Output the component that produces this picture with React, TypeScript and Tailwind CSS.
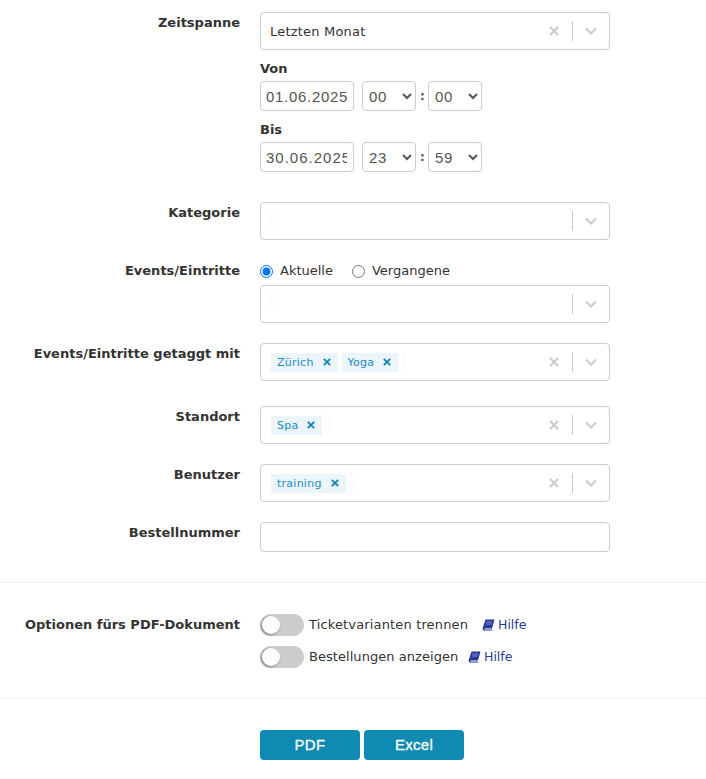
import { ReactNode } from "react";

const Chevron = () => (
  <svg width="12" height="8" viewBox="0 0 12 8" fill="none" className="text-[#cccccc]">
    <path d="M1 1.500 6 6.500l5-5" stroke="currentColor" strokeWidth="2.2" />
  </svg>
);

const Cross = ({ className }: { className: string }) => (
  <svg width="10" height="10" viewBox="0 0 10 10" fill="none" className={className}>
    <path d="M1 1l8 8M9 1 1 9" stroke="currentColor" strokeWidth="2.2" />
  </svg>
);

const BookIcon = () => (
  <svg width="13" height="12" viewBox="0 0 13 12" className="text-[#2a3a9c]">
    <path d="M3.500.500H12.500L10 9.500H3C2 9.500 1.800 10.500 3 10.500H10.500L10.200 11.500H2.500C1 11.500 .300 10.500 .700 9Z" fill="currentColor" />
    <path d="M4.500 3H10M4 5H9.500" stroke="#ffffff" strokeWidth="0.7" opacity="0.6" />
  </svg>
);

function Row({ label, children, className }: { label: string; children: ReactNode; className: string }) {
  return (
    <div className={`flex ${className}`}>
      <label className="w-[240px] pt-px text-right font-bold text-[13px] leading-[20px] text-[#333333] shrink-0">{label}</label>
      <div className="ml-5 w-[350px]">{children}</div>
    </div>
  );
}

function Combo({ tags, value, clear }: { tags?: string[]; value?: string; clear?: boolean }) {
  return (
    <div className="h-[38px] border border-[#cccccc] rounded flex items-center bg-white">
      <div className="flex-1 flex items-center pl-[10px] gap-1">
        {value && <span className="-ml-px pt-[2px] text-[13px] text-[#333333] tracking-[0.2px]">{value}</span>}
        {tags?.map((t) => (
          <span key={t} className="h-[19px] bg-[#ebf5fa] flex items-center pl-[6px] pr-[7px] gap-[9px] text-[11px] tracking-[0.25px] text-[#1a8cc8]">
            <span className="pt-[3px]">{t}</span>
            <Cross className="w-2 h-2 text-[#0f82b8]" />
          </span>
        ))}
        {!value && <span className="w-[3px] h-5 -mt-[2px] border border-[#fafafa] rounded-sm" />}
      </div>
      {clear && <Cross className="mr-[13px] text-[#cccccc]" />}
      <span className="w-px h-5 bg-[#cccccc]" />
      <span className="w-[36px] flex justify-center"><Chevron /></span>
    </div>
  );
}

function Time({ value }: { value: string }) {
  return (
    <select
      defaultValue={value}
      className="w-[54px] h-[30px] border border-[#cccccc] rounded pl-[2px] text-[15px] tracking-[0.7px] text-[#555555] bg-white font-['Liberation_Sans',sans-serif]"
    >
      <option>{value}</option>
    </select>
  );
}

function DateTime({ label, date, hour, minute, dateClass }: { label: string; date: string; hour: string; minute: string; dateClass: string }) {
  return (
    <>
      <div className="pt-px font-bold text-[13px] leading-[20px] text-[#333333] mb-[2px]">{label}</div>
      <div className="flex items-center">
        <input
          readOnly
          value={date}
          className={`w-[94px] h-[30px] border border-[#cccccc] rounded pl-[5px] text-[15px] text-[#555555] font-['Liberation_Sans',sans-serif] ${dateClass}`}
        />
        <span className="w-2" />
        <Time value={hour} />
        <span className="w-3 pl-px text-center text-[12px] font-bold text-[#555555]">:</span>
        <Time value={minute} />
      </div>
    </>
  );
}

function Toggle({ label, labelClass, className }: { label: string; labelClass: string; className: string }) {
  return (
    <div className={`flex items-center h-[22px] ${className}`}>
      <span className="relative w-11 h-[22px] rounded-full bg-[#cccccc]">
        <span className="absolute left-[2px] top-[2px] w-[18px] h-[18px] rounded-full bg-white shadow-[-1px_1px_3px_rgba(0,0,0,0.4)]" />
      </span>
      <span className={`ml-[5px] text-[13px] text-[#333333] ${labelClass}`}>{label}</span>
      <span className="flex items-center gap-[3px] text-[12.5px] text-[#2a3a9c]">
        <BookIcon />
        Hilfe
      </span>
    </div>
  );
}

export default function App() {
  return (
    <div className="w-[706px] h-[779px] bg-white overflow-hidden pt-3 font-['DejaVu_Sans','Verdana',sans-serif]">
      <Row label="Zeitspanne" className="">
        <Combo value="Letzten Monat" clear />
        <div className="mt-2">
          <DateTime label="Von" date="01.06.2025" hour="00" minute="00" dateClass="pr-[5px] tracking-[0.7px]" />
        </div>
        <div className="mt-2">
          <DateTime label="Bis" date="30.06.2025" hour="23" minute="59" dateClass="pr-[6px] tracking-[1px]" />
        </div>
      </Row>
      <Row label="Kategorie" className="mt-[30px]">
        <Combo />
      </Row>
      <Row label="Events/Eintritte" className="mt-[20px]">
        <div className="h-[25px] -mt-px pb-[1px] flex items-center text-[13px] text-[#333333]">
          <input type="radio" name="events" defaultChecked className="w-[13px] h-[13px] m-0" />
          <span className="ml-[7px]">Aktuelle</span>
          <input type="radio" name="events" className="w-[13px] h-[13px] m-0 ml-[19px]" />
          <span className="ml-[7px]">Vergangene</span>
        </div>
        <div className="mt-px">
          <Combo />
        </div>
      </Row>
      <Row label="Events/Eintritte getaggt mit" className="mt-[20px]">
        <Combo tags={["Zürich", "Yoga"]} clear />
      </Row>
      <Row label="Standort" className="mt-[25px]">
        <Combo tags={["Spa"]} clear />
      </Row>
      <Row label="Benutzer" className="mt-[20px]">
        <Combo tags={["training"]} clear />
      </Row>
      <Row label="Bestellnummer" className="mt-[20px]">
        <input readOnly className="block w-full h-[30px] border border-[#cccccc] rounded" />
      </Row>
      <div className="mt-[30px] border-t border-[#eeeeee]" />
      <Row label="Optionen fürs PDF-Dokument" className="mt-[31px]">
        <Toggle label="Ticketvarianten trennen" labelClass="w-[173px] tracking-[0.15px]" className="" />
        <Toggle label="Bestellungen anzeigen" labelClass="w-[159px] tracking-[0.05px]" className="mt-[10px]" />
      </Row>
      <div className="mt-[30px] border-t border-[#eeeeee]" />
      <div className="mt-[31px] ml-[260px] flex gap-1">
        <button className="w-[100px] h-[30px] rounded bg-[#0f8ab3] text-white text-[15px] tracking-[0.3px] [-webkit-text-stroke:0.3px_white] font-['Liberation_Sans',sans-serif]">PDF</button>
        <button className="w-[100px] h-[30px] rounded bg-[#0f8ab3] text-white text-[15px] tracking-[0.3px] [-webkit-text-stroke:0.3px_white] font-['Liberation_Sans',sans-serif]">Excel</button>
      </div>
    </div>
  );
}
